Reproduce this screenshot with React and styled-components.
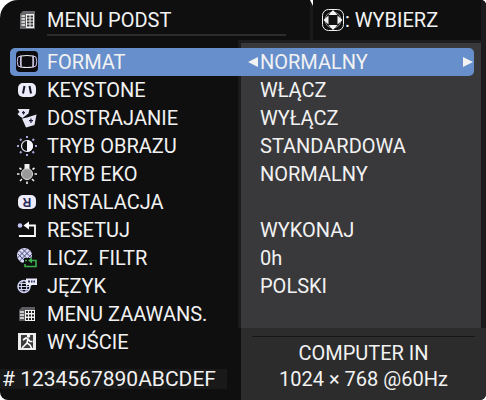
import React, { useState } from "react";
import styled, { createGlobalStyle } from "styled-components";

const GlobalStyle = createGlobalStyle`
  * {
    box-sizing: border-box;
  }

  body {
    margin: 0;
    background: #fff;
  }
`;

const Osd = styled.main`
  overflow: hidden;
  border-radius: 18px 5px 6px 8px;
  background: #0f0f10;
  color: #f2f2f2;
  font-family: "Roboto", sans-serif;
  font-size: 20px;
  line-height: 28px;
`;

const Header = styled.header`
  display: grid;
  grid-template-columns: 310px 1fr;
  height: 40px;
`;

const Title = styled.div`
  display: flex;
  align-items: center;
  gap: 8px;
  padding: 0 24px 0 15px;
`;

const Heading = styled.h1`
  flex: 1;
  height: 32px;
  margin: 0;
  padding-top: 2px;
  border-bottom: 2px solid #2c2c2d;
  font-size: 20px;
  font-weight: 400;
`;

const Hint = styled.div`
  position: relative;
  display: flex;
  align-items: center;
  padding-left: 8px;
  border-left: 3px solid #1a1a1b;
  border-right: 5px solid #1b1b1c;

  /* gap between the two rounded header panels */
  &::before {
    content: "";
    position: absolute;
    top: 0;
    left: -3px;
    width: 3px;
    height: 6px;
    background: #fff;
    clip-path: polygon(0 0, 100% 0, 100% 100%);
  }
`;

const MenuList = styled.ul`
  margin: 0;
  padding: 8px 12px 0 10px;
  list-style: none;
  background:
    linear-gradient(#1d1d1e, #1d1d1e) 241px 0 / 100% 3px no-repeat,
    linear-gradient(
      90deg,
      #0f0f10 0 238px,
      #1b1b1c 238px 241px,
      #39393c 241px calc(100% - 5px),
      #1b1b1c calc(100% - 5px)
    );
`;

const MenuButton = styled.button`
  display: grid;
  grid-template-columns: 24px 193px 1fr 12px;
  column-gap: 8px;
  align-items: center;
  width: 100%;
  height: 28px;
  padding: 0 0 0 5px;
  border: 0;
  border-radius: 5px;
  background: ${({ $active }) => ($active ? "#678fcb" : "transparent")};
  color: inherit;
  font: inherit;
  text-align: left;
  white-space: nowrap;
  cursor: pointer;
`;

const Value = styled.span`
  display: flex;
  align-items: center;
`;

const ArrowSlot = styled.span`
  display: flex;
  flex: none;
  width: 12px;
`;

const Bottom = styled.footer`
  display: grid;
  grid-template-columns: 241px 1fr;
`;

const Exit = styled.div`
  padding-left: 10px;
`;

const Serial = styled.p`
  width: 227px;
  margin: 13px 0 0;
  padding-left: 2px;
  background: #19191a;
  font-size: 21px;
  line-height: 20px;
`;

const Signal = styled.section`
  padding: 8px 5px;
  background: #2c2c2d;
  text-align: center;
`;

const SignalText = styled.p`
  margin: 0;
  line-height: 26px;
`;

const Divider = styled.hr`
  height: 1px;
  margin: 0 6px 3px;
  border: 0;
  background: #171718;
`;

const Icon = ({ children }) => (
  <svg width="24" height="24" viewBox="0 0 24 24" fill="none" aria-hidden="true">
    {children}
  </svg>
);

const Arrow = ({ d }) => (
  <svg width="12" height="12" viewBox="0 0 12 12" aria-hidden="true">
    <path d={d} fill="#f2f2f2" />
  </svg>
);

const FormatIcon = () => (
  <Icon>
    <rect x="1" y="1" width="22" height="21" rx="4" fill="#0b0b10" />
    <path d="M6 6Q12 5 18 6V17Q12 18 6 17Z" stroke="#eee" strokeWidth="1.2" />
    <path
      d="M6 6L3 7Q1.5 11.5 3 16L6 17Q4.5 11.5 6 6M18 6L21 7Q22.5 11.5 21 16L18 17Q19.5 11.5 18 6"
      stroke="#cfc3ee"
    />
  </Icon>
);

const KeystoneIcon = () => (
  <Icon>
    <rect x="3" y="5" width="18" height="14" rx="5" fill="#ececfa" />
    <path d="M9.5 8L8 15.5M14.5 8L16 15.5" stroke="#15152a" strokeWidth="2" />
  </Icon>
);

const AdjustIcon = () => (
  <Icon>
    <path d="M2.500 3H14.5L13.5 7.500L7.500 12L5 10.500L2.500 8L4.500 6Z" fill="#e6e6f6" />
    <path d="M7 12.5L12 11.500L21.5 8.5L19.5 19L11 21.5Z" fill="#e6e6f6" />
    <path d="M8.500 5V8.500M7 6.700H10M16 12.500V17M14 14.700H18" stroke="#20203c" strokeWidth="1.2" />
  </Icon>
);

const PictureIcon = () => (
  <Icon>
    <circle cx="12" cy="12" r="5.5" stroke="#e6e6f6" strokeWidth="1.2" />
    <path d="M12 6A6 6 0 0 1 12 18Z" fill="#f4f4ff" />
    <path
      d="M12 2V4M12 20V22M2 12H4M20 12H22M5 5L6.5 6.5M17.5 17.5L19 19M5 19L6.5 17.5M17.5 6.5L19 5"
      stroke="#a6a6dc"
      strokeWidth="2"
    />
  </Icon>
);

const EcoIcon = () => (
  <Icon>
    <rect x="9.5" y="2" width="5" height="5" fill="#eee" />
    <circle cx="12" cy="12" r="5.5" fill="#999" stroke="#ddd" />
    <path
      d="M2 12H4.5M19.5 12H22M4.5 6L6.5 7.5M19.5 6L17.5 7.5M5 19L7 17M19 19L17 17M12 19.5V22"
      stroke="#eee"
      strokeWidth="1.6"
    />
  </Icon>
);

const InstallIcon = () => (
  <Icon>
    <rect x="3" y="5" width="18" height="14" rx="5" fill="#ececfa" />
    <text
      x="12"
      y="16"
      transform="rotate(180 12 12)"
      textAnchor="middle"
      fontFamily="Liberation Sans"
      fontSize="12"
      fontWeight="700"
      fill="#2c2c5c"
    >
      R
    </text>
  </Icon>
);

const ResetIcon = () => (
  <Icon>
    <circle cx="5" cy="7.5" r="2.3" fill="#c4c4f4" />
    <path d="M8.5 7.5L14 3.5V11.5Z" fill="#fff" />
    <path d="M13 7.5H20V18H4" stroke="#fff" strokeWidth="1.8" />
  </Icon>
);

const FilterIcon = () => (
  <Icon>
    <circle cx="9.5" cy="9.5" r="7.5" fill="#d8d8f2" />
    <path
      d="M3 8L12 17M4 4.500L15 15.5M7 2.5L17 12.5M2.5 12L12 2.5M4.5 15L15 4.5M8 17L17 8"
      stroke="#4a4a80"
    />
    <path d="M9 12H22V22H9Z" fill="#0f0f10" />
    <path d="M10 14.500H12M16 14.5H21V20.500H10V18" stroke="#3cae4c" strokeWidth="1.6" />
    <path d="M13 14.5L17 11.5V17.5Z" fill="#3cae4c" />
  </Icon>
);

const LanguageIcon = () => (
  <Icon>
    <circle cx="9" cy="12.5" r="6" stroke="#d0d0f4" strokeWidth="1.5" />
    <ellipse cx="9" cy="12.5" rx="2.7" ry="6" stroke="#d0d0f4" strokeWidth="1.2" />
    <path d="M3 12.5H15M4 9.5H14M4 15.5H14" stroke="#d0d0f4" strokeWidth="1.2" />
    <path d="M11 4.5H22V11H17L14 13V11H11Z" fill="#ececff" />
    <path d="M13 7.5H15M16 7.5H17.5M18.5 7.5H20" stroke="#30305c" strokeWidth="2" />
  </Icon>
);

const AdvancedIcon = () => (
  <Icon>
    <path d="M7 5H20V19H4V8Z" fill="#5c5c60" />
    <path d="M5 10H9M5 13H9M5 16H9" stroke="#eee" strokeWidth="1.3" />
    <rect x="10" y="8" width="10" height="11" fill="#f2f2f2" />
    <path
      d="M11 10H13M14 10H16M17 10H19M11 13.5H13M14 13.5H16M17 13.5H19M11 17H13M14 17H16M17 17H19"
      stroke="#222"
      strokeWidth="2"
    />
  </Icon>
);

const ExitIcon = () => (
  <Icon>
    <rect x="3" y="3" width="18" height="17" fill="#ececec" />
    <path d="M6 5H18V18H6Z" fill="#3c3c3c" />
    <circle cx="13.5" cy="6" r="1.7" fill="#fff" />
    <path
      d="M8 10L11 8L13 9L12 13L15 15L17 19M12 13L9.5 15.5L7 18M13 9L15 11.5H17.5"
      stroke="#fff"
      strokeWidth="1.6"
    />
  </Icon>
);

const MenuIcon = () => (
  <Icon>
    <path d="M8 3H20V21H5V6Z" fill="#68686c" />
    <path d="M6.5 8H10M6.5 11H10M6.5 14H10M6.5 17H10" stroke="#eee" strokeWidth="1.4" />
    <rect x="11" y="6" width="8" height="14" fill="#f2f2f2" />
    <path
      d="M12 8.5H14.5M15.5 8.5H18M12 11.5H14.5M15.5 11.5H18M12 14.5H14.5M15.5 14.5H18M12 17.5H14.5M15.5 17.5H18"
      stroke="#333"
      strokeWidth="1.8"
    />
  </Icon>
);

const PadIcon = () => (
  <Icon>
    <rect x="1.5" y="1.5" width="21" height="21" rx="6" stroke="#f2f2f2" />
    <circle cx="12" cy="12" r="8" stroke="#8a8a8a" />
    <path
      d="M12 2L16.5 7H7.5ZM12 22L16.5 17H7.5ZM2.5 12L7.5 7.5V16.5ZM21.5 12L16.5 7.5V16.5Z"
      fill="#f2f2f2"
    />
  </Icon>
);

const items = [
  { label: "FORMAT", value: "NORMALNY", icon: FormatIcon },
  { label: "KEYSTONE", value: "WŁĄCZ", icon: KeystoneIcon },
  { label: "DOSTRAJANIE", value: "WYŁĄCZ", icon: AdjustIcon },
  { label: "TRYB OBRAZU", value: "STANDARDOWA", icon: PictureIcon },
  { label: "TRYB EKO", value: "NORMALNY", icon: EcoIcon },
  { label: "INSTALACJA", value: "", icon: InstallIcon },
  { label: "RESETUJ", value: "WYKONAJ", icon: ResetIcon },
  { label: "LICZ. FILTR", value: "0h", icon: FilterIcon },
  { label: "JĘZYK", value: "POLSKI", icon: LanguageIcon },
  { label: "MENU ZAAWANS.", value: "", icon: AdvancedIcon },
];

const MenuItem = ({ label, value, icon: ItemIcon, active, onClick }) => (
  <MenuButton type="button" $active={active} onClick={onClick}>
    <ItemIcon />
    <span>{label}</span>
    {value && (
      <Value>
        <ArrowSlot>{active && <Arrow d="M0 6L10 1V11Z" />}</ArrowSlot>
        {value}
      </Value>
    )}
    {active && value && <Arrow d="M11 6L1 1V11Z" />}
  </MenuButton>
);

const App = () => {
  const [selected, setSelected] = useState("FORMAT");

  return (
    <>
      <GlobalStyle />
      <Osd>
        <Header>
          <Title>
            <MenuIcon />
            <Heading>MENU PODST</Heading>
          </Title>
          <Hint>
            <PadIcon />
            <span>: WYBIERZ</span>
          </Hint>
        </Header>
        <MenuList>
          {items.map((item) => (
            <li key={item.label}>
              <MenuItem
                {...item}
                active={selected === item.label}
                onClick={() => setSelected(item.label)}
              />
            </li>
          ))}
        </MenuList>
        <Bottom>
          <div>
            <Exit>
              <MenuItem
                label="WYJŚCIE"
                icon={ExitIcon}
                active={selected === "WYJŚCIE"}
                onClick={() => setSelected("WYJŚCIE")}
              />
            </Exit>
            <Serial># 1234567890ABCDEF</Serial>
          </div>
          <Signal>
            <Divider />
            <SignalText>COMPUTER IN</SignalText>
            <SignalText>1024 × 768 @60Hz</SignalText>
          </Signal>
        </Bottom>
      </Osd>
    </>
  );
};

export default App;
